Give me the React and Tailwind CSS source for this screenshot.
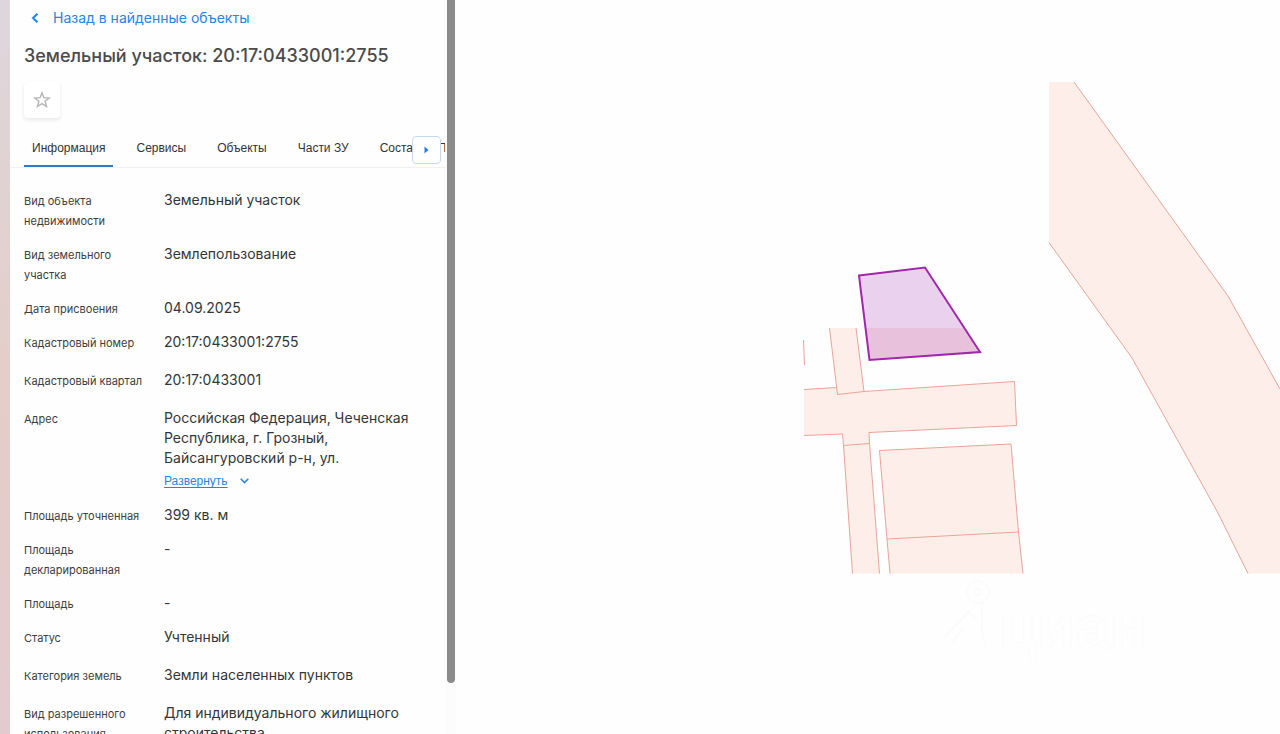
import React from "react";

const tabs = ["Информация", "Сервисы", "Объекты", "Части ЗУ", "Состав ЕЗП"];

const rows = [
  { label: "Вид объекта недвижимости", value: "Земельный участок" },
  { label: "Вид земельного участка", value: "Землепользование" },
  { label: "Дата присвоения", value: "04.09.2025" },
  { label: "Кадастровый номер", value: "20:17:0433001:2755", loose: true },
  { label: "Кадастровый квартал", value: "20:17:0433001", loose: true },
  {
    label: "Адрес",
    value: "Российская Федерация, Чеченская Республика, г. Грозный, Байсангуровский р-н, ул.",
    expandable: true,
  },
  { label: "Площадь уточненная", value: "399 кв. м" },
  { label: "Площадь декларированная", value: "-" },
  { label: "Площадь", value: "-" },
  { label: "Статус", value: "Учтенный", loose: true },
  { label: "Категория земель", value: "Земли населенных пунктов", loose: true },
  { label: "Вид разрешенного использования", value: "Для индивидуального жилищного строительства" },
];

function Row({ label, value, loose, expandable }) {
  return (
    <div className={loose ? "flex pb-[17px]" : "flex pb-[13px]"}>
      <dt className="w-[140px] shrink-0 pt-px pr-5 text-[11px] leading-5 text-[#3c3e40]">{label}</dt>
      <dd className="w-[260px] pb-px text-[14px] leading-5 text-[#333638]">
        {value}
        {expandable && (
          <button
            type="button"
            className="mt-[3px] flex h-5 items-center gap-3 font-['Liberation_Sans',sans-serif] text-[12px] text-[#2b83e0]"
          >
            <span className="underline underline-offset-2">Развернуть</span>
            <svg width="9" height="6" viewBox="0 0 9 6" fill="none" stroke="currentColor" strokeWidth="1.5" aria-hidden="true">
              <path d="M0.7 0.8 4.5 4.6 8.3 0.8" />
            </svg>
          </button>
        )}
      </dd>
    </div>
  );
}

function ParcelMap() {
  return (
    <svg className="block h-full w-full" viewBox="456 0 824 734" preserveAspectRatio="xMidYMid slice" role="img" aria-label="Карта участков">
      <g fill="#fdeeea">
        <path d="M1049 82H1074L1228 296 1280 389V573.500H1248L1218 513 1132 358 1049 242.500Z" />
        <path d="M829.500 328H856L864 392 1014.500 381.500 1016.500 425.500 869 432.500 869.500 443.500 879.500 573.500H852.500L843.500 445 842.500 434 804 435.500V389.500L837 387.500Z" />
        <path d="M879.500 450.500 1011 444 1018.500 532 1023 573.500H890L887 539Z" />
      </g>
      <g fill="none" stroke="#e9a497" strokeWidth="1">
        <path d="M1074 82 1228 296 1280 389M1049 242.500 1132 358 1218 513 1248 573.500" />
        <path d="M829.500 328 837.500 394.500 864 391.500M856 328 864 391.500 1014.500 381.500 1016.500 425.500 869 432.500 869.500 443.500 879.500 573.500M804 389.500 837 387.500M804 435.500 842.500 434 843.500 445 852.500 573.500M843.500 445.500 869.500 443.500" />
        <path d="M890 573.500 887 539 879.500 450.500 1011 444 1018.500 532 1023 573.500M887 539 1018.500 532M803.500 340 804.500 365" />
      </g>
      <path d="M859 275.500 925 267.500 980 352 869.500 360Z" fill="#ead1ee" />
      <path d="M865.500 328H964.500L980 352 869.500 360Z" fill="#e8c2dd" />
      <path d="M859 275.500 925 267.500 980 352 869.500 360Z" fill="none" stroke="#a126aa" strokeWidth="2" />
      <g fill="none" stroke="#fbfbfb" strokeWidth="2">
        <circle cx="978" cy="592" r="11" />
        <circle cx="978" cy="592" r="3" />
        <path d="M982 603V634L986 646M944 638 968 612 976 618M952 642 964 628" />
        <text x="999" y="648" fontSize="62" fontWeight="700" fontFamily="'Liberation Sans', sans-serif" strokeWidth="1" fill="#fefefe">
          циан
        </text>
      </g>
    </svg>
  );
}

export default function App() {
  return (
    <div className="flex h-screen overflow-hidden bg-[#fefefe] font-['Inter',sans-serif]">
      <div className="w-[10px] shrink-0 bg-linear-to-b from-[#ded6dc] via-[#e3cec9] via-50% to-[#e1cbcf]" />
      <aside className="flex w-[446px] shrink-0">
        <div className="flex min-w-0 flex-1 flex-col overflow-hidden pl-[14px]">
          <a href="#results" className="mt-2 flex h-5 items-center gap-[14px] pl-[7px] text-[14px] leading-5 text-[#2584e8]">
            <svg width="8" height="10" viewBox="0 0 8 10" fill="none" stroke="currentColor" strokeWidth="2" aria-hidden="true">
              <path d="M6.500 0.700 2 5 6.500 9.300" />
            </svg>
            Назад в найденные объекты
          </a>
          <h1 className="mt-4 text-[18px] leading-6 font-medium text-[#4b4b4b]">Земельный участок: 20:17:0433001:2755</h1>
          <button
            type="button"
            aria-label="В избранное"
            className="mt-[14px] flex h-9 w-9 shrink-0 items-center justify-center rounded bg-white shadow-[0_2px_4px_rgba(0,0,0,0.09)]"
          >
            <svg width="18" height="18" viewBox="0 0 18 18" fill="none" stroke="#b4b4b4" strokeWidth="1.4" strokeLinejoin="miter" aria-hidden="true">
              <path d="M9 1.800 10.900 6.700 16.300 7 12.100 10.300 13.500 15.500 9 12.600 4.500 15.500 5.900 10.300 1.700 7 7.100 6.700Z" />
            </svg>
          </button>
          <div className="relative -ml-[14px] mt-[13px] shrink-0 border-b border-[#f0f0f0] pl-[14px]">
            <nav className="flex gap-[15px] overflow-hidden font-['Liberation_Sans',sans-serif] text-[12px] text-[#333]">
              {tabs.map((tab, i) => (
                <button
                  key={tab}
                  type="button"
                  className={
                    i === 0
                      ? "h-9 shrink-0 border-b-2 border-[#2a7bc8] px-2 whitespace-nowrap"
                      : "h-9 shrink-0 border-b-2 border-transparent px-2 whitespace-nowrap"
                  }
                >
                  {tab}
                </button>
              ))}
            </nav>
            <button
              type="button"
              aria-label="Следующие вкладки"
              className="absolute top-[5px] right-1 flex h-7 w-[29px] items-center justify-center rounded border border-[#c3d9f3] bg-white"
            >
              <svg width="5" height="8" viewBox="0 0 5 8" fill="#1f7fe5" aria-hidden="true">
                <path d="M0.500 0.500 4.500 4 0.500 7.500Z" />
              </svg>
            </button>
          </div>
          <dl className="mt-[22px]">
            {rows.map((row) => (
              <Row key={row.label} {...row} />
            ))}
          </dl>
        </div>
        <div className="w-[11px] shrink-0 bg-[#fcfcfc] pr-px pl-[2px]">
          <div className="h-[93%] rounded-b bg-[#8b8b8b]" />
        </div>
      </aside>
      <main className="min-w-0 flex-1">
        <ParcelMap />
      </main>
    </div>
  );
}
